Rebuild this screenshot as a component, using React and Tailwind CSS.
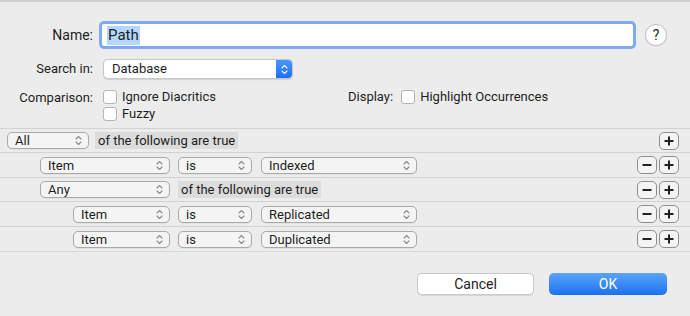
import React from "react";

const Chev = ({ color = "#8a8a8a", w = 7, h = 11 }) => (
  <svg width={w} height={h} viewBox="0 0 7 11" fill="none">
    <path d="M1 4 L3.5 1.5 L6 4" stroke={color} strokeWidth="1.1" strokeLinecap="round" strokeLinejoin="round" />
    <path d="M1 7 L3.5 9.5 L6 7" stroke={color} strokeWidth="1.1" strokeLinecap="round" strokeLinejoin="round" />
  </svg>
);

const Popup = ({ label, w }) => (
  <div
    className="h-[17px] flex items-center justify-between rounded-[5px] border border-[#a9a9a9] bg-[#f4f4f4] pl-[7px] pr-[6px] shadow-[0_0.5px_0_rgba(0,0,0,0.08)]"
    style={{ width: w }}
  >
    <span className="leading-none">{label}</span>
    <Chev />
  </div>
);

const Phrase = ({ text }) => (
  <div className="h-[17px] flex items-center bg-[#dcdcdc] px-[3px] leading-none">{text}</div>
);

const PMButton = ({ sign }) => (
  <div className="w-[20px] h-[18px] flex items-center justify-center rounded-[5px] border border-[#8e8e8e] bg-[#f4f4f4]">
    <svg width="10" height="10" viewBox="0 0 10 10">
      <rect x="0.5" y="4" width="9" height="2" fill="#222" />
      {sign === "+" && <rect x="4" y="0.5" width="2" height="9" fill="#222" />}
    </svg>
  </div>
);

const Row = ({ h, indent, children, minus = true }) => (
  <div className="flex items-center border-t border-[#d2d2d2] pr-[11px]" style={{ height: h }}>
    <div className="flex items-center flex-1" style={{ paddingLeft: indent }}>
      {children}
    </div>
    <div className="flex items-center gap-[2px]">
      {minus && <PMButton sign="-" />}
      <PMButton sign="+" />
    </div>
  </div>
);

const Checkbox = () => (
  <div className="w-[14px] h-[14px] rounded-[3px] border border-[#b4b4b4] bg-white" />
);

export default function App() {
  return (
    <div
      className="w-[690px] h-[316px] bg-[#ececec] border-t-2 border-[#cfcfcf] text-[13px] text-[#1e1e1e] overflow-hidden"
      style={{ fontFamily: "Roboto, 'Liberation Sans', sans-serif" }}
    >
      {/* Name row */}
      <div className="flex items-center h-[28px] mt-[19px]">
        <div className="w-[94px] text-right text-[14px] pr-[1px]">Name:</div>
        <div className="ml-[5px] w-[537px] h-[28px] rounded-[5px] border-[3px] border-[#80a9ef] bg-white flex items-center pl-[5px]">
          <span className="bg-[#b3d7ff] text-[15px] leading-[19px] px-[1px]">Path</span>
        </div>
        <div className="ml-[9px] w-[22px] h-[22px] rounded-full border border-[#c4c4c4] bg-white flex items-center justify-center text-[14px] shadow-[0_0.5px_1px_rgba(0,0,0,0.1)]">
          ?
        </div>
      </div>

      {/* Search in */}
      <div className="flex items-center h-[20px] mt-[10px]">
        <div className="w-[94px] text-right pr-[1px]">Search in:</div>
        <div className="ml-[9px] w-[190px] h-[20px] flex rounded-[5px] border border-[#c8c8c8] bg-white shadow-[0_0.5px_1px_rgba(0,0,0,0.12)] overflow-hidden">
          <div className="flex-1 flex items-center pl-[8px]">Database</div>
          <div className="w-[16px] h-full bg-gradient-to-b from-[#4a97f8] to-[#1b6ef2] flex items-center justify-center">
            <Chev color="#ffffff" />
          </div>
        </div>
      </div>

      {/* Comparison / Display */}
      <div className="flex h-[36px] mt-[10px]">
        <div className="w-[94px] text-right pr-[1px] h-[17px] flex items-center justify-end">Comparison:</div>
        <div className="ml-[9px] flex flex-col gap-[2px] w-[245px]">
          <div className="flex items-center gap-[5px] h-[15px]">
            <Checkbox />
            <span>Ignore Diacritics</span>
          </div>
          <div className="flex items-center gap-[5px] h-[15px]">
            <Checkbox />
            <span>Fuzzy</span>
          </div>
        </div>
        <div className="flex items-start">
          <div className="flex items-center h-[15px]">
            <span>Display:</span>
            <div className="ml-[8px]"><Checkbox /></div>
            <span className="ml-[5px]">Highlight Occurrences</span>
          </div>
        </div>
      </div>

      {/* Criteria */}
      <div className="mt-[3px] border-b border-[#d8d8d8]">
        <Row h={24} indent={7} minus={false}>
          <Popup label="All" w={82} />
          <div className="ml-[6px]"><Phrase text="of the following are true" /></div>
        </Row>
        <Row h={25} indent={40}>
          <Popup label="Item" w={130} />
          <div className="ml-[8px]"><Popup label="is" w={74} /></div>
          <div className="ml-[9px]"><Popup label="Indexed" w={156} /></div>
        </Row>
        <Row h={24} indent={40}>
          <Popup label="Any" w={130} />
          <div className="ml-[8px]"><Phrase text="of the following are true" /></div>
        </Row>
        <Row h={25} indent={73}>
          <Popup label="Item" w={97} />
          <div className="ml-[8px]"><Popup label="is" w={74} /></div>
          <div className="ml-[9px]"><Popup label="Replicated" w={156} /></div>
        </Row>
        <Row h={25} indent={73}>
          <Popup label="Item" w={97} />
          <div className="ml-[8px]"><Popup label="is" w={74} /></div>
          <div className="ml-[9px]"><Popup label="Duplicated" w={156} /></div>
        </Row>
      </div>

      {/* Footer */}
      <div className="flex justify-end gap-[15px] pr-[23px] mt-[21px]">
        <div className="w-[117px] h-[22px] rounded-[5px] border border-[#cacaca] bg-white flex items-center justify-center shadow-[0_0.5px_1px_rgba(0,0,0,0.1)] text-[14px]">
          Cancel
        </div>
        <div className="w-[118px] h-[22px] rounded-[5px] bg-gradient-to-b from-[#5aa3fa] to-[#1a70f1] flex items-center justify-center text-white text-[14px]">
          OK
        </div>
      </div>
    </div>
  );
}
